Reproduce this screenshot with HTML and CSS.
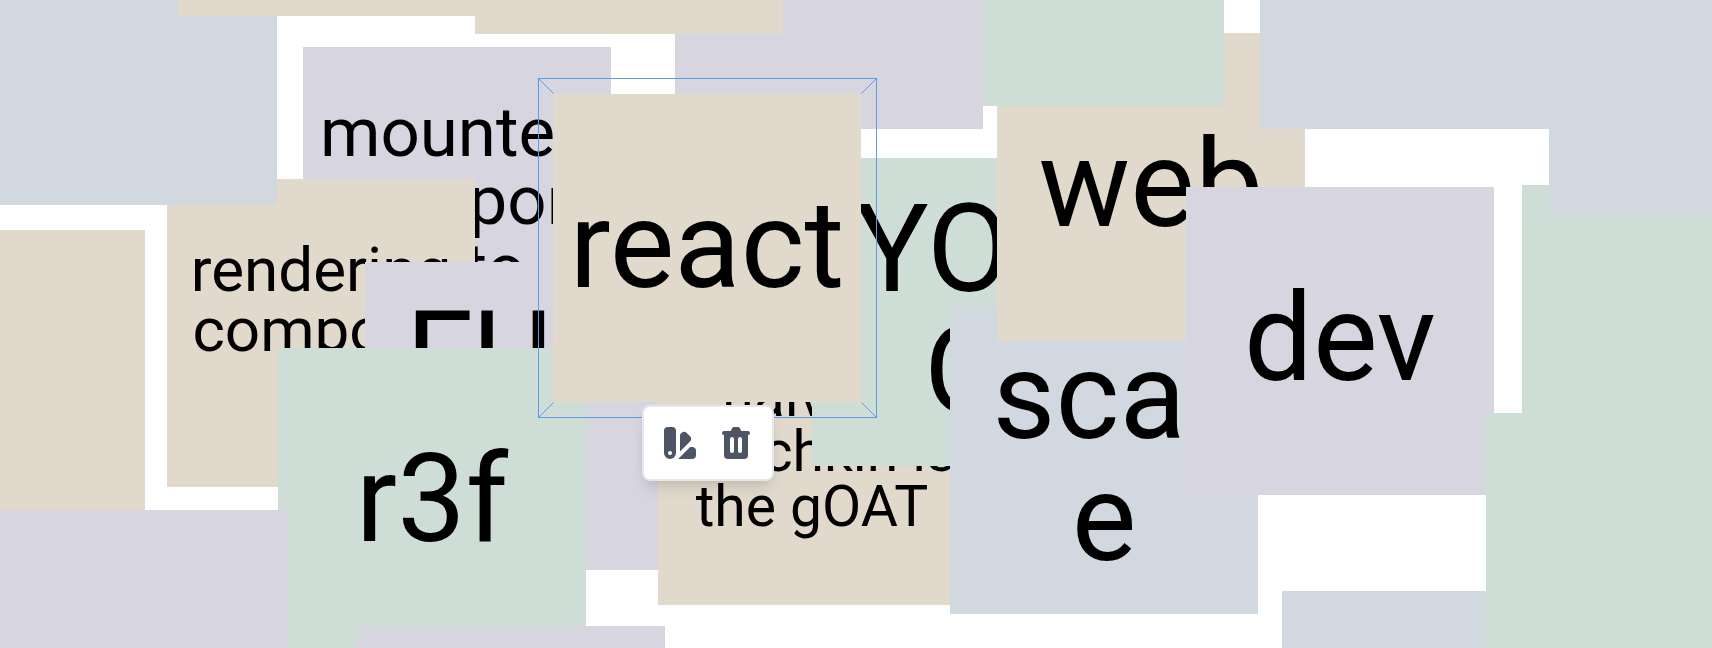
FILE: index.html
```html
<!DOCTYPE html>
<html lang="en">
<head>
    <meta charset="UTF-8">
    <meta name="viewport" content="width=device-width, initial-scale=1.0">
    <title>Sticky notes</title>
    <link rel="stylesheet" href="styles.css">
</head>
<body>
    <div class="board">
        <!-- notes are in paint order, last one on top -->
        <div class="note beige n-f"></div>
        <div class="note lavender n-d size-69">mounted<br>over port<br>on to.</div>
        <div class="note beige n-e size-62">rendering<br>compose<br>it</div>
        <div class="note slate n-a"></div>
        <div class="note lavender n-h">FUD<br>K</div>
        <div class="note green n-i">r3f</div>
        <div class="note lavender n-g"></div>
        <div class="note lavender n-j"></div>
        <div class="note beige n-b"></div>
        <div class="note beige n-l size-57">naivety<br>the chkin is<br>the gOAT</div>
        <div class="note green n-m">YOL<br>O</div>
        <div class="note slate n-v">scal<br>e</div>
        <div class="note beige n-n">web</div>
        <div class="note lavender n-u">dev</div>
        <div class="note green n-s"></div>
        <div class="note slate n-w"></div>
        <div class="note green n-t"></div>
        <div class="note slate n-r"></div>
        <div class="note green n-o"></div>
        <div class="note lavender n-p"></div>
        <div class="note beige n-c"></div>
        <div class="note slate n-q"></div>
        <div class="note beige n-react">react</div>

        <svg class="selection" width="339" height="340" viewBox="0 0 339 340">
            <rect x="0.5" y="0.5" width="338" height="339"></rect>
            <path d="M0.5 0.5L15.5 15.5M338.5 0.5L323.5 15.5M0.5 339.5L15.5 324.5M338.5 339.5L323.5 324.5"></path>
        </svg>

        <div class="toolbar">
            <svg class="icon" viewBox="0 0 20 20"><path fill-rule="evenodd" clip-rule="evenodd" d="M4 2a2 2 0 00-2 2v11a3 3 0 106 0V4a2 2 0 00-2-2H4zm1 14a1 1 0 100-2 1 1 0 000 2zm5-1.757l4.9-4.9a2 2 0 000-2.828L13.485 5.1a2 2 0 00-2.828 0L10 5.757v8.486zM16 18H9.071l6-6H16a2 2 0 012 2v2a2 2 0 01-2 2z"></path></svg>
            <svg class="icon" viewBox="0 0 20 20"><path fill-rule="evenodd" clip-rule="evenodd" d="M9 2a1 1 0 00-.894.553L7.382 4H4a1 1 0 000 2v10a2 2 0 002 2h8a2 2 0 002-2V6a1 1 0 100-2h-3.382l-.724-1.447A1 1 0 0011 2H9zM7 8a1 1 0 012 0v6a1 1 0 11-2 0V8zm5-1a1 1 0 00-1 1v6a1 1 0 102 0V8a1 1 0 00-1-1z"></path></svg>
        </div>
    </div>
</body>
</html>
```

FILE: styles.css
```css
html, body {
    margin: 0;
    height: 100%;
    background: #fff;
}
.board {
    position: relative;
    width: 1712px;
    height: 648px;
    overflow: hidden;
    font-family: Roboto, sans-serif;
    color: #000;
}
.note {
    position: absolute;
    box-sizing: border-box;
    width: 308px;
    height: 308px;
    padding-bottom: 4px;
    display: flex;
    align-items: center;
    justify-content: center;
    text-align: center;
    white-space: nowrap;
    font-size: 122px;
    line-height: 1;
}
.size-69 { font-size: 69px; line-height: 68px; padding-bottom: 0; }
.size-62 { font-size: 62px; line-height: 60px; padding-bottom: 6px; }
.size-57 { font-size: 57px; line-height: 55px; padding-bottom: 0; }

.beige { background: #e0d9cc; }
.lavender { background: #d6d5e0; }
.green { background: #cfddd7; }
.slate { background: #d1d8e0; }

/* free canvas, so every note has its own place */
.n-a { left: -31px; top: -103px; }
.n-b { left: 178px; top: -292px; }
.n-c { left: 475px; top: -274px; }
.n-d { left: 303px; top: 47px; }
.n-e { left: 167px; top: 179px; }
.n-f { left: -163px; top: 230px; }
.n-g { left: -20px; top: 510px; }
.n-h { left: 365px; top: 262px; padding: 3px 0 0; }
.n-i { left: 278px; top: 348px; }
.n-j { left: 357px; top: 626px; }
.n-l { left: 658px; top: 297px; }
.n-m { left: 812px; top: 158px; padding-bottom: 2px; }
.n-n { left: 997px; top: 33px; }
.n-o { left: 916px; top: -202px; }
.n-p { left: 675px; top: -179px; }
.n-q { left: 1260px; top: -179px; }
.n-r { left: 1549px; top: -95px; }
.n-s { left: 1522px; top: 185px; }
.n-t { left: 1486px; top: 413px; }
.n-u { left: 1186px; top: 187px; }
.n-v { left: 950px; top: 306px; }
.n-w { left: 1282px; top: 591px; }
.n-react { left: 553px; top: 94px; }

.selection {
    position: absolute;
    left: 538px;
    top: 78px;
    fill: none;
    stroke: #5c9ce6;
    stroke-width: 1;
}

.toolbar {
    position: absolute;
    left: 642px;
    top: 405px;
    display: flex;
    gap: 16px;
    padding: 16px;
    background: #fff;
    border: 2px solid #e5e7eb;
    border-radius: 8px;
    box-shadow: 0 10px 15px -3px rgba(0, 0, 0, 0.1), 0 4px 6px -2px rgba(0, 0, 0, 0.05);
}
.icon {
    width: 40px;
    height: 40px;
    fill: #4b5563;
}
```
